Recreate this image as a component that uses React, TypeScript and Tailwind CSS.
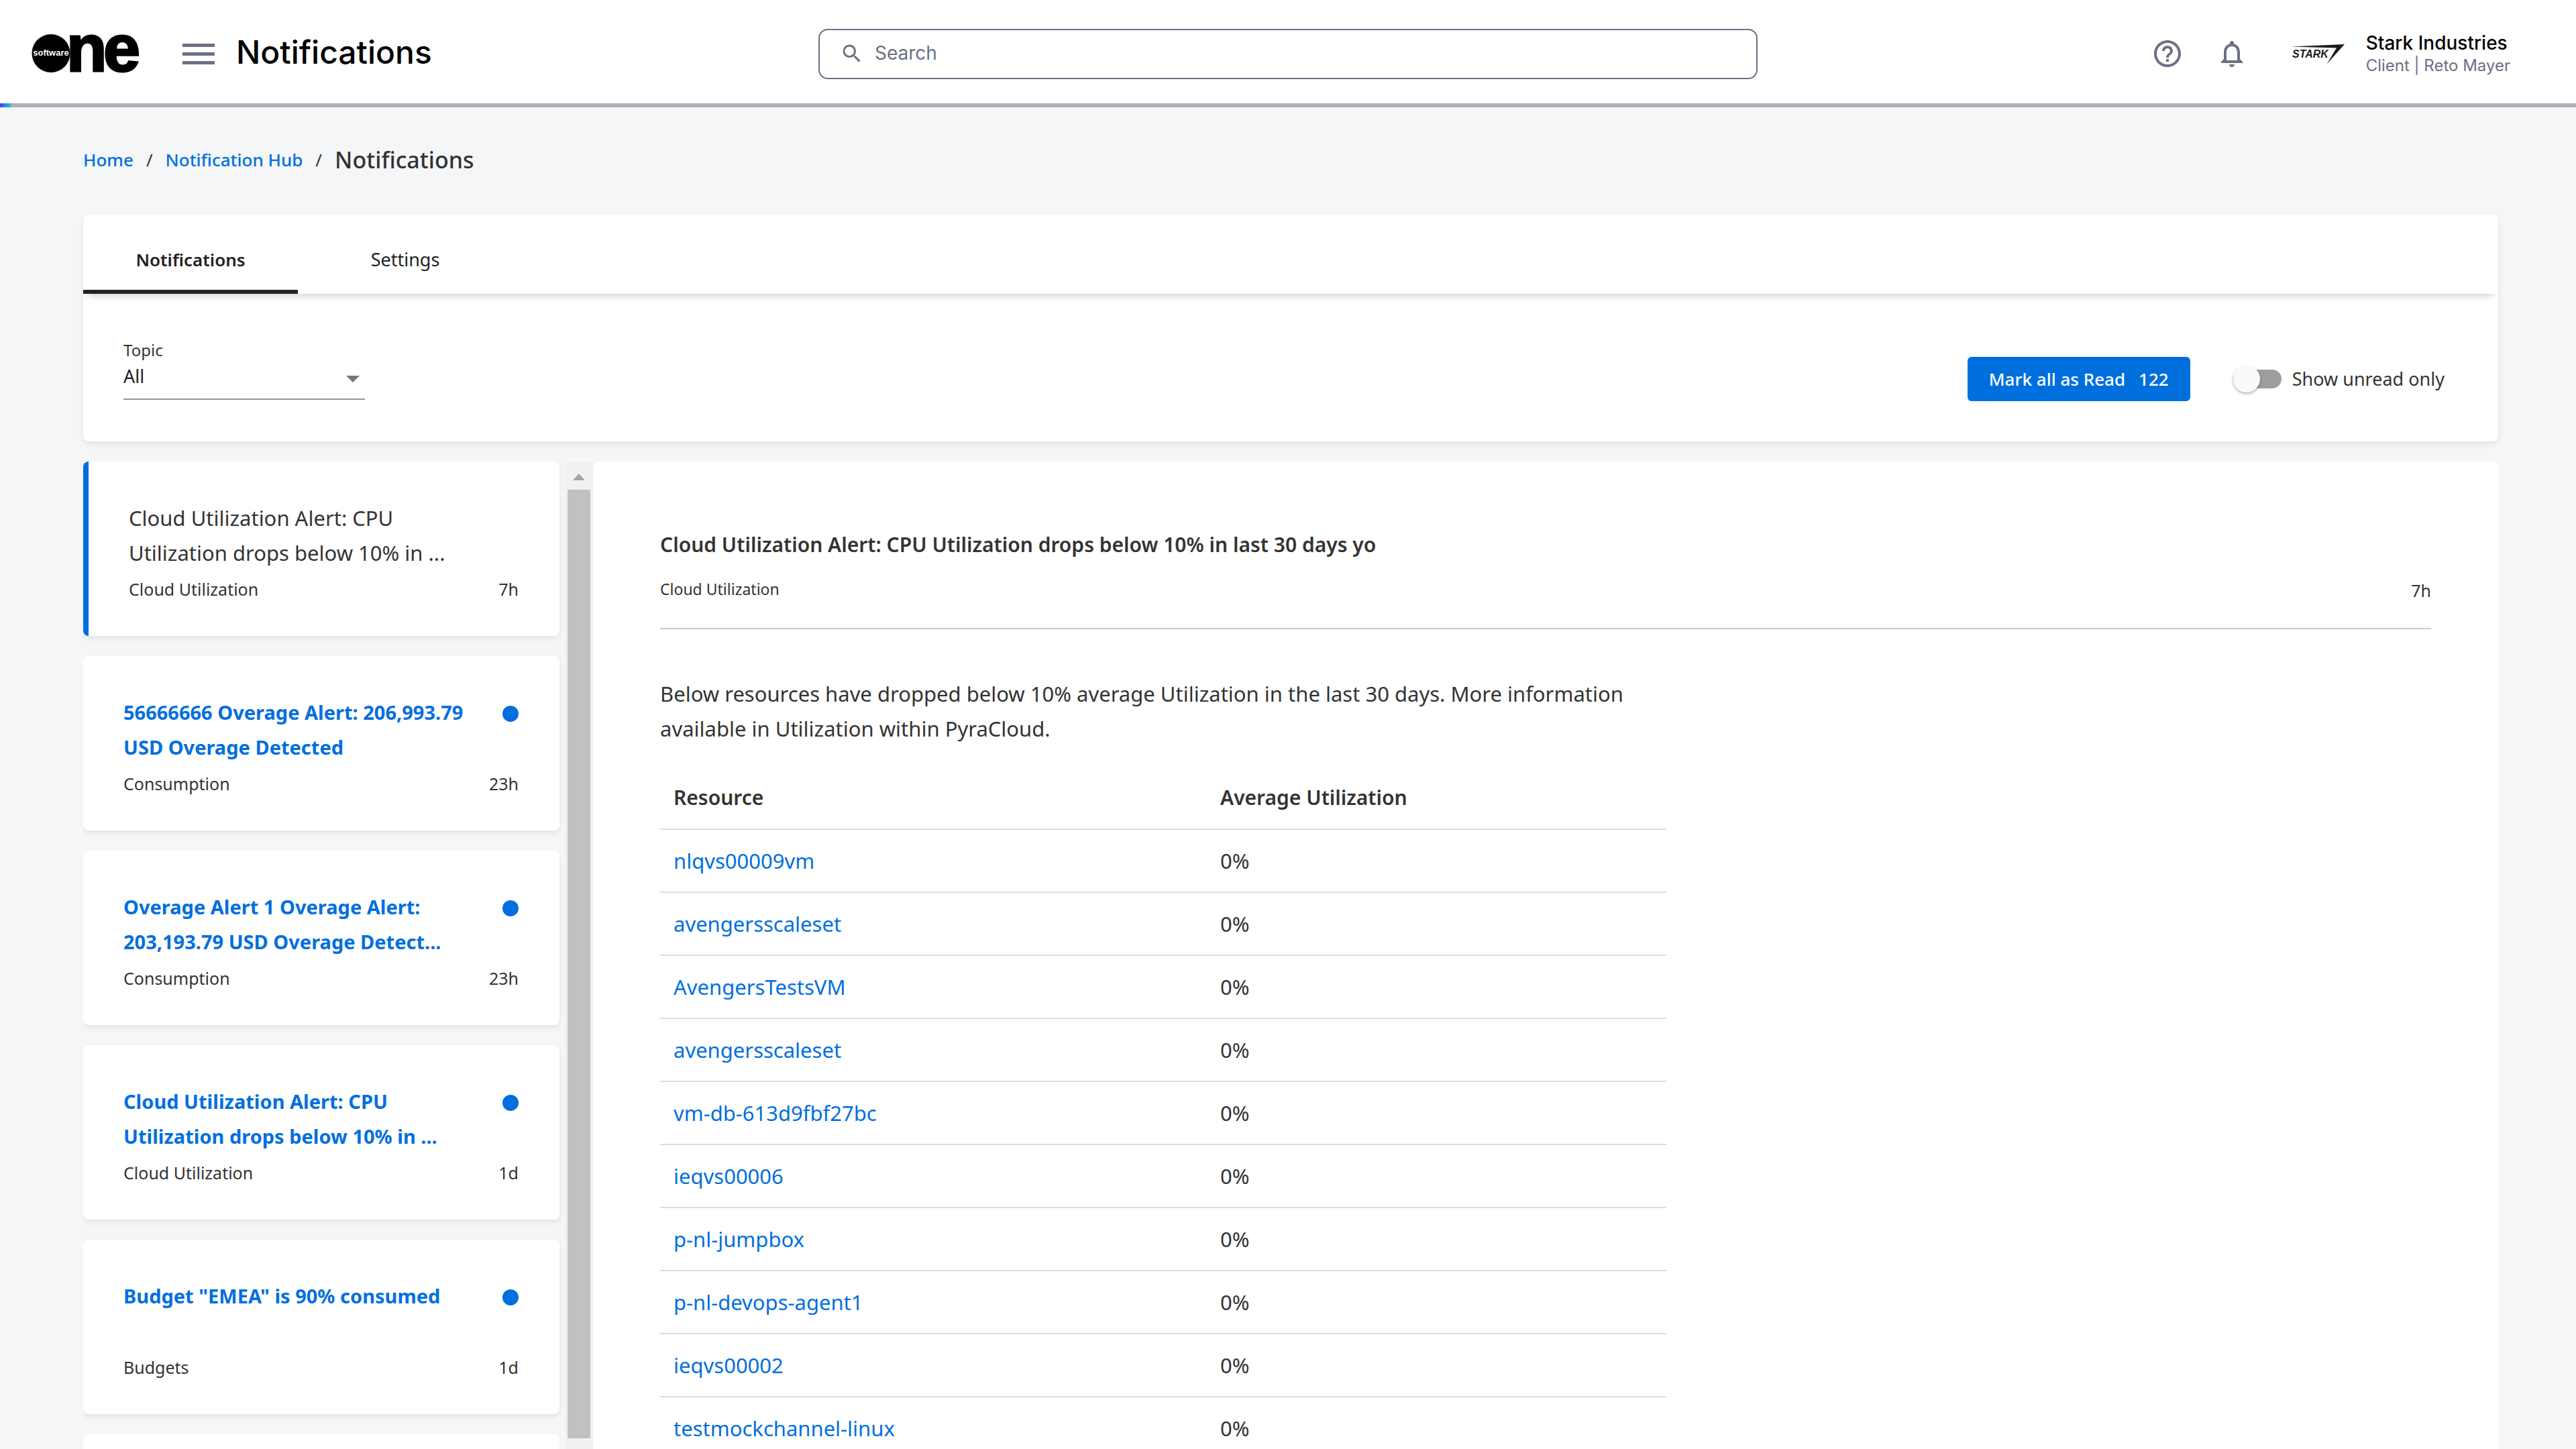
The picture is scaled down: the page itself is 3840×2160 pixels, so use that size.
import { MdHelpOutline, MdNotificationsNone, MdSearch } from "react-icons/md";

type Notification = {
  lines: string[];
  topic: string;
  age: string;
  unread: boolean;
};

const notifications: Notification[] = [
  { lines: ["Cloud Utilization Alert: CPU", "Utilization drops below 10% in ..."], topic: "Cloud Utilization", age: "7h", unread: false },
  { lines: ["56666666 Overage Alert: 206,993.79", "USD Overage Detected"], topic: "Consumption", age: "23h", unread: true },
  { lines: ["Overage Alert 1 Overage Alert:", "203,193.79 USD Overage Detect..."], topic: "Consumption", age: "23h", unread: true },
  { lines: ["Cloud Utilization Alert: CPU", "Utilization drops below 10% in ..."], topic: "Cloud Utilization", age: "1d", unread: true },
  { lines: ['Budget "EMEA" is 90% consumed'], topic: "Budgets", age: "1d", unread: true },
];

const resources = [
  "nlqvs00009vm",
  "avengersscaleset",
  "AvengersTestsVM",
  "avengersscaleset",
  "vm-db-613d9fbf27bc",
  "ieqvs00006",
  "p-nl-jumpbox",
  "p-nl-devops-agent1",
  "ieqvs00002",
  "testmockchannel-linux",
];

function OneLogo() {
  return (
    <svg width="164" height="128" viewBox="16 -14 164 128" role="img" aria-label="SoftwareOne" className="shrink-0 overflow-visible">
      <circle cx="46" cy="49.5" r="28.5" fill="#000" />
      <g fontFamily="'Liberation Sans', Arial, sans-serif" fontWeight="700">
        <text x="69" y="76" fontSize="99" stroke="#000" strokeWidth="3">n</text>
        <text x="124" y="76" fontSize="99" stroke="#000" strokeWidth="3">e</text>
        <text x="46" y="52.5" fontSize="13" fill="#fff" textAnchor="middle">software</text>
      </g>
    </svg>
  );
}

function StarkLogo() {
  return (
    <svg width="80" height="32" viewBox="16 13 80 32" role="img" aria-label="Stark" className="shrink-0">
      <path d="M16 18.4 L96 15 L69.5 44.5 L84 20.4 Z" fill="#1b1b1b" />
      <text x="18" y="34.5" fontSize="16" fontWeight="700" fontStyle="italic" fontFamily="'Liberation Sans', Arial, sans-serif" fill="#1b1b1b">
        STARK
      </text>
    </svg>
  );
}

function Header() {
  return (
    <header className="shrink-0 bg-white font-['Inter',sans-serif]">
      <div className="grid h-[154px] grid-cols-[1fr_minmax(0,1400px)_1fr] items-center px-[46px] pt-1.5">
        <div className="flex items-center">
          <OneLogo />
          <button type="button" aria-label="Open menu" className="ml-[62px] flex w-12 flex-col gap-2">
            <span className="h-[5px] bg-[#6b7085]" />
            <span className="h-[5px] bg-[#6b7085]" />
            <span className="h-[5px] bg-[#6b7085]" />
          </button>
          <span className="ml-8 pb-1 text-[48px] font-medium leading-[56px] text-black">Notifications</span>
        </div>
        <label className="flex h-[75px] items-center gap-4 rounded-[14px] border-2 border-[#6b7085] pl-[30px] text-[#6b7085]">
          <MdSearch className="size-9 shrink-0" />
          <input
            type="search"
            aria-label="Search"
            placeholder="Search"
            className="w-full bg-transparent pb-0.5 text-[28px] leading-9 outline-none placeholder:text-[#6b7085]"
          />
        </label>
        <div className="flex items-center justify-end pr-[52px]">
          <button type="button" aria-label="Help" className="text-[#6b7085]">
            <MdHelpOutline className="size-12" />
          </button>
          <button type="button" aria-label="Notifications" className="ml-12 text-[#6b7085]">
            <MdNotificationsNone className="size-12" />
          </button>
          <button type="button" className="ml-16 flex items-center gap-8 text-left">
            <StarkLogo />
            <span>
              <span className="block text-[28px] font-medium leading-9 text-black">Stark Industries</span>
              <span className="block text-[24px] leading-8 text-[#6b7085]">Client | Reto Mayer</span>
            </span>
          </button>
        </div>
      </div>
      <div className="h-1.5 bg-[#aeb0bb]">
        <div className="h-1.5 w-4 bg-linear-to-r from-[#472aff] to-[#00c9cd]" />
      </div>
    </header>
  );
}

function Breadcrumb() {
  return (
    <nav aria-label="Breadcrumb" className="shrink-0">
      <ol className="flex h-40 items-center gap-[19px] pb-1 text-[26px] font-medium leading-10">
        <li><a href="#home" className="text-[#006fde]">Home</a></li>
        <li aria-hidden="true" className="font-normal">/</li>
        <li><a href="#hub" className="text-[#006fde]">Notification Hub</a></li>
        <li aria-hidden="true" className="font-normal">/</li>
        <li aria-current="page" className="text-[34px]">Notifications</li>
      </ol>
    </nav>
  );
}

function Toolbar() {
  return (
    <section className="shrink-0 rounded-lg bg-white shadow-[0_4px_8px_rgba(0,0,0,0.08)]">
      <div role="tablist" className="flex text-[27px] text-[#222222] shadow-[0_10px_10px_-7px_rgba(0,0,0,0.18)]">
        <button type="button" role="tab" aria-selected="true" className="h-[118px] w-[320px] border-b-[6px] border-[#222222] pt-7 pb-1.5 text-[26px] font-semibold">
          Notifications
        </button>
        <button type="button" role="tab" aria-selected="false" className="h-[118px] w-[320px] pt-7 pb-3">
          Settings
        </button>
      </div>
      <div className="flex h-[220px] items-end justify-between pr-20 pb-[60px] pl-[60px] text-[27px]">
        <div className="mb-0.5 w-[360px]">
          <label htmlFor="topic" className="block text-[24px] leading-9">Topic</label>
          <div className="relative">
            <select id="topic" className="h-14 w-full appearance-none border-b-2 border-[#949494] bg-transparent pb-3 leading-10 text-[#222222]">
              <option>All</option>
            </select>
            <svg viewBox="0 0 20 10" className="pointer-events-none absolute top-5 right-2 h-2.5 w-5" aria-hidden="true">
              <path d="M0 0h20L10 10z" fill="#757575" />
            </svg>
          </div>
        </div>
        <div className="flex items-center gap-16">
          <button type="button" className="flex h-[66px] items-center gap-5 rounded-md bg-[#006fde] px-8 text-[26px] font-medium text-white">
            <span>Mark all as Read</span>
            <span>122</span>
          </button>
          <label className="flex items-center gap-4">
            <input
              type="checkbox"
              role="switch"
              className="relative h-7 w-[72px] appearance-none rounded-full bg-[#9e9e9e] before:absolute before:-top-1.5 before:left-0 before:size-10 before:rounded-full before:bg-[#fafafa] before:shadow-[0_2px_4px_rgba(0,0,0,0.3)]"
            />
            Show unread only
          </label>
        </div>
      </div>
    </section>
  );
}

function NotificationCard({ item, selected }: { item: Notification; selected: boolean }) {
  return (
    <li>
      <button
        type="button"
        className={
          selected
            ? "flex h-[260px] w-full flex-col rounded-lg border-l-8 border-[#006fde] bg-white pr-[61px] pl-[60px] pt-[58px] text-left shadow-[0_4px_8px_rgba(0,0,0,0.08)]"
            : "flex h-[260px] w-full flex-col rounded-lg bg-white pr-[61px] pl-[60px] pt-[58px] text-left shadow-[0_4px_8px_rgba(0,0,0,0.08)]"
        }
      >
        <span className="flex h-[104px] w-full items-start justify-between">
          <span className={item.unread ? "text-[29px] font-bold leading-[52px] text-[#006fde]" : "text-[31px] leading-[52px]"}>
            {item.lines.map((line) => (
              <span key={line} className="block whitespace-nowrap">{line}</span>
            ))}
          </span>
          {item.unread && <span className="mt-4 size-6 shrink-0 rounded-full bg-[#006fde]" />}
        </span>
        <span className="mt-2.5 flex w-full justify-between text-[25px] leading-9">
          <span>{item.topic}</span>
          <span>{item.age}</span>
        </span>
      </button>
    </li>
  );
}

function NotificationList() {
  return (
    <aside className="flex w-[760px] shrink-0 overflow-hidden">
      <ul className="flex flex-1 flex-col gap-[30px] pr-2">
        {notifications.map((item, index) => (
          <NotificationCard key={index} item={item} selected={index === 0} />
        ))}
        <li className="h-[260px] shrink-0 rounded-lg bg-white" />
      </ul>
      <div className="flex w-[42px] flex-col items-center bg-[#f1f1f1] pt-[18px] pb-4">
        <svg viewBox="0 0 18 10" className="mb-3.5 h-2.5 w-[18px] shrink-0" aria-hidden="true">
          <path d="M9 0l9 10H0z" fill="#a3a3a3" />
        </svg>
        <div className="w-[34px] flex-1 bg-[#c1c1c1]" />
      </div>
    </aside>
  );
}

function NotificationDetail() {
  return (
    <article className="min-w-0 flex-1 overflow-hidden rounded-tl-lg rounded-tr-lg bg-white px-[100px] pt-[98px] text-[31px] leading-[52px]">
      <header className="border-b-2 border-[#c8cad3] pb-[34px]">
        <h1 className="text-[30px] font-semibold">Cloud Utilization Alert: CPU Utilization drops below 10% in last 30 days yo</h1>
        <div className="mt-5 flex items-start justify-between">
          <span className="text-[23px] leading-10">Cloud Utilization</span>
          <span className="text-[25px] leading-[44px]">7h</span>
        </div>
      </header>
      <p className="mt-[70px] max-w-[1500px]">
        Below resources have dropped below 10% average Utilization in the last 30 days. More information available in Utilization within PyraCloud.
      </p>
      <table className="mt-[30px] w-full max-w-[1500px] table-fixed border-collapse text-left">
        <thead>
          <tr className="h-[94px] border-b-2 border-[#dddddd] text-[30px]">
            <th scope="col" className="w-[815px] px-5 font-semibold">Resource</th>
            <th scope="col" className="px-5 font-semibold">Average Utilization</th>
          </tr>
        </thead>
        <tbody>
          {resources.map((name, index) => (
            <tr key={index} className="h-[94px] border-b-2 border-[#dddddd]">
              <td className="px-5"><a href={`#${name}`} className="text-[#006fde]">{name}</a></td>
              <td className="px-5">0%</td>
            </tr>
          ))}
        </tbody>
      </table>
    </article>
  );
}

export default function App() {
  return (
    <div className="flex h-screen flex-col overflow-hidden bg-[#f4f6f8] font-['Noto_Sans',sans-serif] text-[#333333]">
      <Header />
      <main className="flex min-h-0 flex-1 flex-col pr-[116px] pl-[124px]">
        <Breadcrumb />
        <Toolbar />
        <div className="mt-[30px] flex min-h-0 flex-1">
          <NotificationList />
          <NotificationDetail />
        </div>
      </main>
    </div>
  );
}
